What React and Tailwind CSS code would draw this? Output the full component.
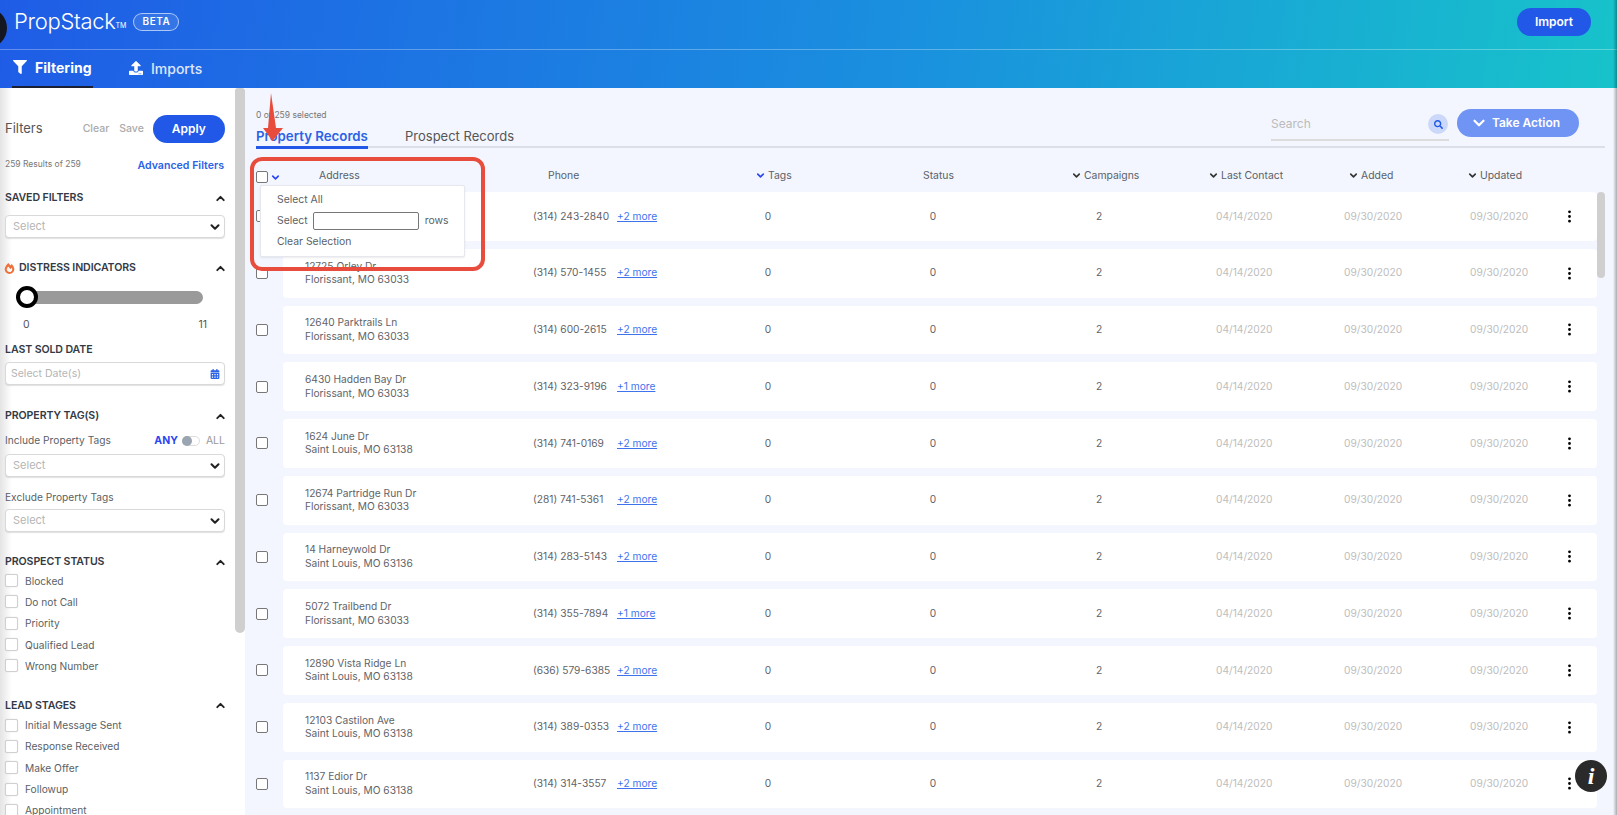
import React from 'react';
import { ChevronDown, ChevronUp } from 'lucide-react';
import { FaFilter, FaUpload, FaCalendarAlt, FaFireAlt, FaSearch } from 'react-icons/fa';
import { BsThreeDotsVertical } from 'react-icons/bs';

const rows = [
  { street: '', city: '', phone: '(314) 243-2840', more: '+2 more' },
  { street: '12725 Orley Dr', city: 'Florissant, MO 63033', phone: '(314) 570-1455', more: '+2 more' },
  { street: '12640 Parktrails Ln', city: 'Florissant, MO 63033', phone: '(314) 600-2615', more: '+2 more' },
  { street: '6430 Hadden Bay Dr', city: 'Florissant, MO 63033', phone: '(314) 323-9196', more: '+1 more' },
  { street: '1624 June Dr', city: 'Saint Louis, MO 63138', phone: '(314) 741-0169', more: '+2 more' },
  { street: '12674 Partridge Run Dr', city: 'Florissant, MO 63033', phone: '(281) 741-5361', more: '+2 more' },
  { street: '14 Harneywold Dr', city: 'Saint Louis, MO 63136', phone: '(314) 283-5143', more: '+2 more' },
  { street: '5072 Trailbend Dr', city: 'Florissant, MO 63033', phone: '(314) 355-7894', more: '+1 more' },
  { street: '12890 Vista Ridge Ln', city: 'Saint Louis, MO 63138', phone: '(636) 579-6385', more: '+2 more' },
  { street: '12103 Castilon Ave', city: 'Saint Louis, MO 63138', phone: '(314) 389-0353', more: '+2 more' },
  { street: '1137 Edior Dr', city: 'Saint Louis, MO 63138', phone: '(314) 314-3557', more: '+2 more' },
];

const SectionTitle = ({ children, className = '' }) => (
  <div className={`flex items-center justify-between pr-[3px] ${className}`}>
    <span className="text-[10.6px] font-semibold text-[#333a45] tracking-[-0.1px]">{children}</span>
    <ChevronUp size={13} strokeWidth={3.5} className="text-[#222]" />
  </div>
);

const SelectBox = ({ className = '' }) => (
  <div className={`flex items-center justify-between h-[23px] w-[220px] bg-white border border-[#d9d9d9] rounded-[4px] shadow-[0_1px_1px_rgba(0,0,0,0.12)] pl-[7px] pr-[2px] ${className}`}>
    <span className="text-[11px] text-[#b5b5b5]">Select</span>
    <ChevronDown size={14} strokeWidth={3.5} className="text-[#222]" />
  </div>
);

const CheckItem = ({ label }) => (
  <div className="flex items-center h-[21.3px]">
    <span className="w-[13px] h-[13px] border border-[#d0d0d0] rounded-[2px] bg-white mr-[7px] shadow-[0_0_1px_rgba(0,0,0,0.2)]" />
    <span className="text-[10.2px] leading-[10px] text-[#5a5f66]">{label}</span>
  </div>
);

const Box = ({ className = '' }) => (
  <span className={`block w-[12px] h-[12px] border border-[#777] rounded-[2px] bg-white ${className}`} />
);

const HeadCell = ({ label, sort, blue, className = '' }) => (
  <div className={`flex items-center text-[10.4px] text-[#5a5f69] ${className}`}>
    {sort && (
      <ChevronDown size={11} strokeWidth={3.5} className={`mr-[2px] ${blue ? 'text-[#2b45f0]' : 'text-[#333]'}`} />
    )}
    {label}
  </div>
);

const Sidebar = () => (
  <aside className="flex w-[245px] shrink-0 bg-white">
    <div className="w-[235px] h-[727px] overflow-hidden pl-[5px] pr-[5px] pt-[27px] bg-linear-to-r from-[#e4e4e4] from-0% to-white to-[5%]">
      <div className="flex items-center h-[28px]">
        <span className="text-[13px] text-[#555]">Filters</span>
        <span className="ml-[40px] text-[10.5px] text-[#aaa] font-medium">Clear</span>
        <span className="ml-[10px] text-[10.5px] text-[#aaa] font-medium">Save</span>
        <button className="ml-[9px] w-[72px] h-[28px] rounded-full bg-[#2258e8] text-white text-[12px] font-semibold">Apply</button>
      </div>
      <div className="flex items-start justify-between w-[219px] h-[14px] mt-[14px]">
        <span className="text-[8.5px] text-[#777] leading-[14px]">259 Results of 259</span>
        <span className="text-[10.6px] font-semibold text-[#2b62e6] leading-[14px] mt-[2px]">Advanced Filters</span>
      </div>
      <SectionTitle className="mt-[20px] h-[14px]">SAVED FILTERS</SectionTitle>
      <SelectBox className="mt-[10px]" />

      <div className="flex items-center justify-between pr-[3px] mt-[23px] h-[14px]">
        <span className="flex items-center text-[10.6px] font-semibold text-[#333a45] tracking-[-0.1px]">
          <FaFireAlt size={11} className="text-[#f0703a] mr-[4px] -ml-[1px]" />
          DISTRESS INDICATORS
        </span>
        <ChevronUp size={13} strokeWidth={3.5} className="text-[#222]" />
      </div>
      <div className="relative mt-[16px] ml-[15px] w-[183px] h-[13px] rounded-full bg-[#9a9a9a]">
        <span className="absolute -left-[4px] -top-[5px] w-[22px] h-[22px] rounded-full bg-white border-[4px] border-black" />
      </div>
      <div className="flex justify-between ml-[18px] w-[184px] mt-[14px] text-[10.5px] text-[#555] leading-[14px]">
        <span>0</span>
        <span>11</span>
      </div>
      <div className="mt-[10px] h-[14px] text-[10.6px] font-semibold text-[#333a45] tracking-[-0.1px]">LAST SOLD DATE</div>
      <div className="flex items-center justify-between h-[23px] w-[220px] mt-[6px] bg-white border border-[#d9d9d9] rounded-[4px] shadow-[0_1px_1px_rgba(0,0,0,0.12)] pl-[5px] pr-[4px]">
        <span className="text-[10.5px] text-[#b5b5b5]">Select Date(s)</span>
        <FaCalendarAlt size={10} className="text-[#2b62e6]" />
      </div>

      <SectionTitle className="mt-[24px] h-[14px]">PROPERTY TAG(S)</SectionTitle>
      <div className="flex items-center justify-between mt-[11px] h-[14px] w-[220px]">
        <span className="text-[10.2px] text-[#5a5f66]">Include Property Tags</span>
        <span className="flex items-center text-[10.5px]">
          <span className="font-bold text-[#2b45f0]">ANY</span>
          <span className="relative ml-[4px] mr-[6px] w-[18px] h-[10px] rounded-full border border-[#ddd] bg-white">
            <span className="absolute -left-[1px] -top-[1px] w-[10px] h-[10px] rounded-full bg-[#9aa5b1]" />
          </span>
          <span className="text-[#999]">ALL</span>
        </span>
      </div>
      <SelectBox className="mt-[6px]" />
      <div className="mt-[13px] h-[14px] text-[10.2px] text-[#5a5f66]">Exclude Property Tags</div>
      <SelectBox className="mt-[5px]" />

      <SectionTitle className="mt-[23px] h-[14px]">PROSPECT STATUS</SectionTitle>
      <div className="mt-[1px]">
        {['Blocked', 'Do not Call', 'Priority', 'Qualified Lead', 'Wrong Number'].map((l) => (
          <CheckItem key={l} label={l} />
        ))}
      </div>
      <SectionTitle className="mt-[22px] h-[14px]">LEAD STAGES</SectionTitle>
      <div className="mt-[2px]">
        {['Initial Message Sent', 'Response Received', 'Make Offer', 'Followup', 'Appointment'].map((l) => (
          <CheckItem key={l} label={l} />
        ))}
      </div>
    </div>
    <div className="w-[10px] h-[545px] bg-[#cfcfcf] rounded-b-[5px] rounded-t-[3px]" />
  </aside>
);

const Row = ({ row }) => (
  <div className="flex items-center mb-[8px] h-[48.75px]">
    <div className="w-[38px] pl-[11px]">
      <Box />
    </div>
    <div className="grid grid-cols-[22px_228px_202px_66px_264px_68px_211px_126px_99px_1fr] items-center w-[1314px] h-full bg-white rounded-[4px] text-[10.2px] text-[#5f6368]">
      <div />
      <div className="leading-[13.5px]">
        <div>{row.street}</div>
        <div>{row.city}</div>
      </div>
      <div className="flex items-center">
        <span className="w-[84px]">{row.phone}</span>
        <span className="text-[#3f73ee] underline">{row.more}</span>
      </div>
      <div className="text-center">0</div>
      <div className="text-center">0</div>
      <div className="text-center">2</div>
      <div className="pl-[83px] text-[#bdbdbd]">04/14/2020</div>
      <div className="text-[#bdbdbd]">09/30/2020</div>
      <div className="text-[#bdbdbd]">09/30/2020</div>
      <BsThreeDotsVertical size={15} className="text-black -ml-[7px]" />
    </div>
  </div>
);

const Main = () => (
  <main className="relative flex-1 min-w-0 bg-[#f3f6fe]">
    <div className="flex items-end justify-between h-[60px] ml-[11px] mr-[12px] border-b-2 border-[#dcdfe6]">
      <div>
        <div className="text-[8.5px] text-[#777] leading-[12px] mb-[6px]">0 of 259 selected</div>
        <div className="flex items-end">
          <div className="w-[112px] h-[22px] -mb-[3px] text-[13.25px] font-semibold text-[#2b62e6] border-b-[3px] border-[#2258e8] whitespace-nowrap">Property Records</div>
          <div className="ml-[37px] h-[19px] text-[13px] text-[#555] whitespace-nowrap">Prospect Records</div>
        </div>
      </div>
      <div className="flex items-start mb-[5px] mr-[26px]">
        <div className="flex items-center justify-between w-[178px] h-[32px] border-b-2 border-[#dcdcdc] pr-[1px]">
          <span className="text-[12px] text-[#bbb]">Search</span>
          <span className="flex items-center justify-center w-[20px] h-[20px] rounded-full bg-[#cbd8fa]">
            <FaSearch size={9} className="text-[#2258e8]" />
          </span>
        </div>
        <button className="flex items-center justify-center ml-[8px] w-[122px] h-[28px] pr-[6px] rounded-full bg-[#6f94f3] text-white text-[12px] font-semibold">
          <ChevronDown size={18} strokeWidth={3} className="mr-[4px]" />
          Take Action
        </button>
      </div>
    </div>

    <div className="flex items-center h-[44px] pt-[12px]">
      <div className="flex items-center w-[74px] pl-[11px]">
        <Box className="mt-[2px]" />
        <ChevronDown size={11} strokeWidth={3.5} className="ml-[2px] mt-[2px] text-[#2b45f0]" />
      </div>
      <div className="grid grid-cols-[229px_207px_167px_149px_137px_140px_119px_1fr] items-center flex-1">
        <HeadCell label="Address" />
        <HeadCell label="Phone" />
        <HeadCell label="Tags" sort blue />
        <HeadCell label="Status" className="pl-[1px]" />
        <HeadCell label="Campaigns" sort />
        <HeadCell label="Last Contact" sort />
        <HeadCell label="Added" sort />
        <HeadCell label="Updated" sort />
      </div>
    </div>

    <div className="flex items-start">
      <div className="w-[1352px] shrink-0">
        {rows.map((r, i) => (
          <Row key={i} row={r} />
        ))}
      </div>
      <div className="w-[8px] h-[86px] bg-[#cfcfcf] rounded-[4px]" />
    </div>

    {/* select menu */}
    <div className="absolute left-[15px] top-[97px] w-[205px] h-[72px] bg-white border border-[#e6e8ee] rounded-[2px] shadow-[0_1px_2px_rgba(0,0,0,0.08)] pl-[16px] pr-[2px] text-[10.4px] text-[#5a5f66]">
      <div className="mt-[7px] h-[14px] leading-[14px]">Select All</div>
      <div className="flex items-center mt-[5px] h-[17px]">
        <span>Select</span>
        <span className="ml-[5px] w-[106px] h-[18px] bg-white border border-[#777] rounded-[2px]" />
        <span className="ml-[6px]">rows</span>
      </div>
      <div className="mt-[6px] h-[14px] leading-[14px]">Clear Selection</div>
    </div>

    {/* annotation */}
    <div className="absolute left-[5px] top-[69px] w-[235px] h-[114px] border-[4px] border-[#e74c3c] rounded-[12px]" />
    <svg className="absolute left-[15px] top-[3px]" width="26" height="52" viewBox="0 0 26 52">
      <path d="M11 2 L16 37 L23 37 L12.5 50 L3 37 L8 37 Z" fill="#e74c3c" />
    </svg>
  </main>
);

export default function App() {
  return (
    <div className="relative flex flex-col w-full h-[815px] overflow-hidden font-['Inter',sans-serif] bg-white">
      <header className="relative shrink-0 h-[88px] bg-linear-[100deg,#1f5ce6,#1a8fdf_55%,#17c3ca] text-white">
        <div className="flex items-center justify-between h-[50px] border-b border-white/30 pl-[14px] pr-[26px] pb-[6px]">
          <div className="flex items-center">
            <span className="text-[22px] font-light tracking-[-0.3px]">PropStack</span>
            <span className="text-[7px] mt-[9px]">TM</span>
            <span className="ml-[7px] flex items-center justify-center w-[46px] h-[18px] rounded-full border border-white/60 bg-white/10 text-[10px] font-semibold tracking-[0.5px]">BETA</span>
          </div>
          <button className="w-[74px] h-[28px] rounded-full bg-[#2258e8] text-[12px] font-semibold">Import</button>
        </div>
        <nav className="flex items-stretch h-[38px] pl-[12px]">
          <div className="flex items-center w-[81px] pl-[1px] pb-[2px] border-b-2 border-[#1a1f33]">
            <FaFilter size={14} className="mr-[8px]" />
            <span className="text-[14px] font-bold">Filtering</span>
          </div>
          <div className="flex items-center ml-[36px] pb-[2px]">
            <FaUpload size={14} className="mr-[8px]" />
            <span className="text-[14px] font-medium text-white/85">Imports</span>
          </div>
        </nav>
        <span className="absolute -left-[37px] top-[8px] w-[44px] h-[40px] rounded-full bg-[#14171f]" />
      </header>

      <div className="flex flex-1 min-h-0">
        <Sidebar />
        <Main />
      </div>

      <button className="absolute left-[1575px] top-[760px] flex items-center justify-center w-[32px] h-[32px] rounded-full bg-[#2a2a2a] text-white text-[24px] font-bold italic font-['Liberation_Serif',serif]">i</button>
      <span className="absolute right-0 top-0 w-[4px] h-full bg-linear-to-r from-transparent to-black/30" />
    </div>
  );
}
